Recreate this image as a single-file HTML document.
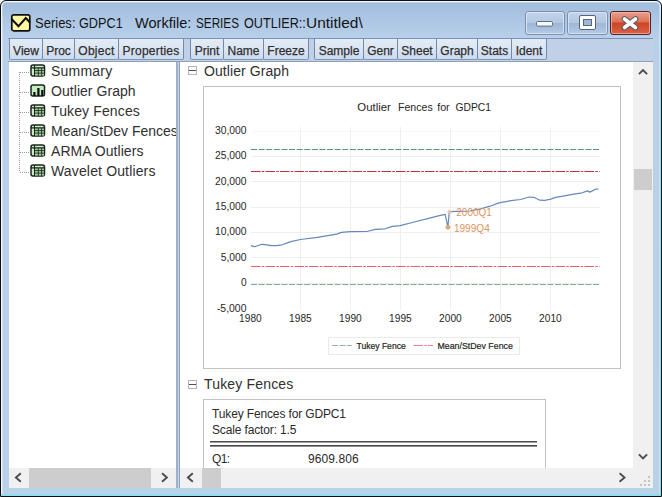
<!DOCTYPE html>
<html>
<head>
<meta charset="utf-8">
<title>Series: GDPC1</title>
<style>
html,body{margin:0;padding:0;background:#fff;}
body{width:662px;height:497px;position:relative;overflow:hidden;font-family:"Liberation Sans",sans-serif;color:#222;}
.abs{position:absolute;}
#win{position:absolute;left:0;top:0;width:660px;height:495px;border:1px solid #0b0f16;border-radius:6px 6px 0 0;
 background:linear-gradient(#a1bddc 0px,#adc7e4 20px,#b8d0ea 38px,#b9d0e9 60px,#b9d0e9 480px,#b8d3e6 100%);
 box-shadow:inset 0 0 0 1px #f4f8fd, inset 0 0 0 2px rgba(255,255,255,.3);}
#cyanb{position:absolute;left:1px;top:494px;width:660px;height:2px;background:linear-gradient(#a3d9ee,#7fe0f2);}
.tw{position:absolute;top:13.5px;font-size:15px;line-height:18px;color:#151515;white-space:pre;transform-origin:0 0;}
/* toolbar */
#tbline{position:absolute;left:8px;top:38px;width:645px;height:1px;background:#7d93b3;}
#tb{position:absolute;left:8px;top:39px;width:645px;height:23px;background:#c0d0e7;border-bottom:1px solid #8fa0ba;box-sizing:border-box;}
.btn{position:absolute;top:38px;height:22px;box-sizing:border-box;border:1px solid #7389a9;border-top-color:#7d93b3;border-bottom-color:#8196b6;border-radius:0 0 2px 2px;
 background:linear-gradient(#e3ebf6,#dbe5f3 50%,#ccdaee);font-size:12px;line-height:24px;color:#303030;text-align:center;white-space:nowrap;overflow:hidden;-webkit-text-stroke:.25px #303030;}
.btn span{display:inline-block;}
/* panels */
#left{position:absolute;left:9px;top:62px;width:167px;height:406px;background:#fff;overflow:hidden;}
#split{position:absolute;left:176px;top:62px;width:4px;height:426px;background:linear-gradient(to right,#a3b3ca 0,#9badc6 2px,#c6d3e6 2px,#c6d3e6 3px,#8fa3c0 3px);}
#right{position:absolute;left:180px;top:62px;width:453px;height:406px;background:#fff;overflow:hidden;}
.ti{position:absolute;left:42px;font-size:14px;line-height:20px;white-space:nowrap;color:#303030;}
.hd{position:absolute;font-size:14px;line-height:20px;white-space:nowrap;color:#303030;}
.box{position:absolute;border:1px solid #c2c2c2;background:#fff;box-sizing:border-box;}
.col{position:absolute;width:9px;height:9px;box-sizing:border-box;border:1px solid #b2b2b2;background:#fff;}
.col:after{content:"";position:absolute;left:0;top:3px;width:7px;height:1px;background:#505050;}
/* scrollbars */
.sb{position:absolute;background:#f0f0f0;}
.th{position:absolute;background:#cdcdcd;}
</style>
</head>
<body>
<div id="win"></div>
<div id="cyanb"></div>
<div class="abs" style="left:660px;top:9px;width:1px;height:487px;background:linear-gradient(#dff0fa,#8fe0f2 40px,#7fe0f2)"></div>

<!-- title icon -->
<svg class="abs" style="left:10px;top:13px" width="22" height="20" viewBox="0 0 22 20">
 <rect x="1.8" y="1.8" width="18" height="16" rx="1.9" fill="#fff9a3" stroke="#111" stroke-width="1.7"/>
 <path d="M1.5 6 L8.5 13.3 L15.8 5 L20 9.5" fill="none" stroke="#111" stroke-width="2.1"/>
</svg>
<div class="tw" style="left:34.7px;transform:scaleX(0.8674)">Series:</div><div class="tw" style="left:78.9px;transform:scaleX(0.8454)">GDPC1</div><div class="tw" style="left:135.2px;transform:scaleX(0.9711)">Workfile:</div><div class="tw" style="left:196.1px;transform:scaleX(0.7814)">SERIES</div><div class="tw" style="left:243.7px;transform:scaleX(0.8424)">OUTLIER::</div><div class="tw" style="left:306.2px;transform:scaleX(1.0303)">Untitled\</div>

<!-- caption buttons -->
<svg class="abs" style="left:524px;top:10px" width="130" height="27" viewBox="0 0 130 27">
 <defs>
  <linearGradient id="gb" x1="0" y1="0" x2="0" y2="1">
   <stop offset="0" stop-color="#c4d5ea"/><stop offset="0.48" stop-color="#b3c8e2"/><stop offset="0.5" stop-color="#9db6d6"/><stop offset="1" stop-color="#b5cbe5"/>
  </linearGradient>
  <linearGradient id="gr" x1="0" y1="0" x2="0" y2="1">
   <stop offset="0" stop-color="#eaa392"/><stop offset="0.45" stop-color="#dd7058"/><stop offset="0.5" stop-color="#cd4426"/><stop offset="1" stop-color="#dc6246"/>
  </linearGradient>
 </defs>
 <rect x="1.5" y="1.5" width="39" height="23" rx="2.5" fill="url(#gb)" stroke="#7d90ad"/>
 <rect x="2.5" y="2.5" width="37" height="21" rx="2" fill="none" stroke="#dfe9f6" stroke-opacity=".8"/>
 <rect x="12.5" y="11.5" width="16" height="4.6" rx="1.2" fill="#f6f8fb" stroke="#5f6e86"/>
 <rect x="43.5" y="1.5" width="40" height="23" rx="2.5" fill="url(#gb)" stroke="#7d90ad"/>
 <rect x="44.5" y="2.5" width="38" height="21" rx="2" fill="none" stroke="#dfe9f6" stroke-opacity=".8"/>
 <rect x="55.5" y="5.5" width="16" height="14" rx="1.5" fill="#fff" stroke="#56657c"/>
 <rect x="59.5" y="9.5" width="8" height="6" fill="#9fb7d5" stroke="#56657c"/>
 <rect x="86.5" y="1.5" width="40" height="23" rx="2.5" fill="url(#gr)" stroke="#4f2424"/>
 <rect x="87.5" y="2.5" width="38" height="21" rx="1.8" fill="none" stroke="#f3c0b2" stroke-opacity=".7"/>
 <path d="M100.5 9 L111.5 17.5 M111.5 9 L100.5 17.5" stroke="#5a5a66" stroke-width="5.6" stroke-linecap="round"/>
 <path d="M100.5 9 L111.5 17.5 M111.5 9 L100.5 17.5" stroke="#fff" stroke-width="3.6" stroke-linecap="round"/>
</svg>

<!-- toolbar -->
<div id="tb"></div>
<div id="tbline"></div>
<div class="btn" style="left:9px;width:34px">View</div>
<div class="btn" style="left:42px;width:33px">Proc</div>
<div class="btn" style="left:74px;width:45px;letter-spacing:.3px">Object</div>
<div class="btn" style="left:118px;width:66px;letter-spacing:.22px">Properties</div>
<div class="btn" style="left:190px;width:34px">Print</div>
<div class="btn" style="left:223px;width:41px">Name</div>
<div class="btn" style="left:263px;width:46px">Freeze</div>
<div class="btn" style="left:314px;width:50px">Sample</div>
<div class="btn" style="left:363px;width:35px">Genr</div>
<div class="btn" style="left:397px;width:40px">Sheet</div>
<div class="btn" style="left:436px;width:42px">Graph</div>
<div class="btn" style="left:477px;width:35px">Stats</div>
<div class="btn" style="left:511px;width:36px">Ident</div>

<!-- left panel -->
<div id="left">
 <svg class="abs" style="left:0;top:0" width="40" height="130" viewBox="0 0 40 130">
  <path d="M10.5 10 V110 M11 10.5 H21 M11 30.5 H21 M11 50.5 H21 M11 70.5 H21 M11 90.5 H21 M11 110.5 H21" fill="none" stroke="#999999" stroke-width="1" stroke-dasharray="1 1"/>
  <g>
   <rect x="22" y="3.1" width="13.5" height="10.9" rx="2" fill="#cdf0c8" stroke="#1a261a" stroke-width="1.5"/>
   <rect x="26" y="6.2" width="9" height="7.3" fill="#a9d2a5"/>
   <path d="M22 5.9 H35.5 M25.5 3 V14" stroke="#1a261a" stroke-width="1.1" fill="none"/>
   <path d="M29.3 6 V14 M32.6 6 V14 M26 8.6 H35 M26 11.1 H35" stroke="#1e2e22" stroke-width=".9" fill="none"/>
  </g>
  <g transform="translate(0,20)">
   <rect x="22" y="3.1" width="13.5" height="10.9" rx="2" fill="#c3ecbf" stroke="#1a261a" stroke-width="1.5"/>
   <path d="M25.4 14 V10 M29.4 14 V6 M33.3 14 V8" stroke="#0c0c0c" stroke-width="2.2" fill="none"/>
  </g>
  <g transform="translate(0,40)">
   <rect x="22" y="3.1" width="13.5" height="10.9" rx="2" fill="#cdf0c8" stroke="#1a261a" stroke-width="1.5"/>
   <rect x="26" y="6.2" width="9" height="7.3" fill="#a9d2a5"/>
   <path d="M22 5.9 H35.5 M25.5 3 V14" stroke="#1a261a" stroke-width="1.1" fill="none"/>
   <path d="M29.3 6 V14 M32.6 6 V14 M26 8.6 H35 M26 11.1 H35" stroke="#1e2e22" stroke-width=".9" fill="none"/>
  </g>
  <g transform="translate(0,60)">
   <rect x="22" y="3.1" width="13.5" height="10.9" rx="2" fill="#cdf0c8" stroke="#1a261a" stroke-width="1.5"/>
   <rect x="26" y="6.2" width="9" height="7.3" fill="#a9d2a5"/>
   <path d="M22 5.9 H35.5 M25.5 3 V14" stroke="#1a261a" stroke-width="1.1" fill="none"/>
   <path d="M29.3 6 V14 M32.6 6 V14 M26 8.6 H35 M26 11.1 H35" stroke="#1e2e22" stroke-width=".9" fill="none"/>
  </g>
  <g transform="translate(0,80)">
   <rect x="22" y="3.1" width="13.5" height="10.9" rx="2" fill="#cdf0c8" stroke="#1a261a" stroke-width="1.5"/>
   <rect x="26" y="6.2" width="9" height="7.3" fill="#a9d2a5"/>
   <path d="M22 5.9 H35.5 M25.5 3 V14" stroke="#1a261a" stroke-width="1.1" fill="none"/>
   <path d="M29.3 6 V14 M32.6 6 V14 M26 8.6 H35 M26 11.1 H35" stroke="#1e2e22" stroke-width=".9" fill="none"/>
  </g>
  <g transform="translate(0,100)">
   <rect x="22" y="3.1" width="13.5" height="10.9" rx="2" fill="#cdf0c8" stroke="#1a261a" stroke-width="1.5"/>
   <rect x="26" y="6.2" width="9" height="7.3" fill="#a9d2a5"/>
   <path d="M22 5.9 H35.5 M25.5 3 V14" stroke="#1a261a" stroke-width="1.1" fill="none"/>
   <path d="M29.3 6 V14 M32.6 6 V14 M26 8.6 H35 M26 11.1 H35" stroke="#1e2e22" stroke-width=".9" fill="none"/>
  </g>
 </svg>
 <div class="ti" style="top:-1px;letter-spacing:.22px">Summary</div>
 <div class="ti" style="top:19px;letter-spacing:.05px">Outlier Graph</div>
 <div class="ti" style="top:39px;letter-spacing:.13px">Tukey Fences</div>
 <div class="ti" style="top:59px">Mean/StDev Fences</div>
 <div class="ti" style="top:79px;letter-spacing:.05px">ARMA Outliers</div>
 <div class="ti" style="top:99px;letter-spacing:.15px">Wavelet Outliers</div>
</div>
<div id="split"></div>

<!-- right panel -->
<div id="right"><div class="abs" style="left:1px;top:0">
 <div class="col" style="left:7px;top:3.5px"></div>
 <div class="hd" style="left:23px;top:-1px;letter-spacing:.08px">Outlier Graph</div>
 <div class="box" style="left:22px;top:24px;width:418px;height:283px"></div>
 <div class="col" style="left:7px;top:317.5px"></div>
 <div class="hd" style="left:23px;top:312px;letter-spacing:.17px">Tukey Fences</div>
 <div class="box" style="left:22px;top:337px;width:343px;height:120px"></div>
 <div class="abs" style="left:31px;top:344.1px;font-size:12px;line-height:16px;white-space:nowrap;color:#2a2a2a;letter-spacing:-.14px">Tukey Fences for GDPC1<br>Scale factor: 1.5</div>
 <div class="abs" style="left:29px;top:379px;width:327px;height:6px;background:linear-gradient(#484848 0,#484848 1px,#a4a4a4 1px,#a4a4a4 2px,#fff 2px,#fff 4px,#484848 4px,#484848 5px,#8c8c8c 5px,#8c8c8c 6px)"></div>
 <div class="abs" style="left:31px;top:390px;font-size:12px;line-height:15px;white-space:nowrap;color:#2a2a2a;letter-spacing:-.6px">Q1:</div>
 <div class="abs" style="left:127px;top:390px;font-size:12px;line-height:15px;white-space:nowrap;color:#2a2a2a;letter-spacing:.08px">9609.806</div>
</div></div>

<!-- graph -->
<svg class="abs" style="left:204px;top:87px" width="417" height="280" viewBox="204 87 417 280" font-family="Liberation Sans, sans-serif">
 <g stroke="#efefef" stroke-width="1" fill="none">
  <path d="M251 131.5 H600" stroke="#f8f8f8"/>
  <path d="M251 156.5 H600 M251 181.5 H600 M251 207.5 H600 M251 232.5 H600 M251 257.5 H600 M251 283.5 H600"/>
  <path d="M300.5 127 V309.5 M350.5 127 V309.5 M400.5 127 V309.5 M450.5 127 V309.5 M500.5 127 V309.5 M550.5 127 V309.5"/>
 </g>
 <path d="M251 149.5 H599.5" stroke="#46895c" stroke-opacity=".9" stroke-width="1" stroke-dasharray="6.1 1.5" fill="none"/>
 <path d="M251 284.5 H599.5" stroke="#5c9a74" stroke-opacity=".8" stroke-width="1" stroke-dasharray="6.1 1.5" fill="none"/>
 <path d="M251 171.5 H599.5" stroke="#b02834" stroke-opacity=".95" stroke-width="1" stroke-dasharray="9.6 1.2 2.5 1.2" fill="none"/>
 <path d="M251 266.5 H599.5" stroke="#dc3648" stroke-opacity=".8" stroke-width="1" stroke-dasharray="9.6 1.2 2.5 1.2" fill="none"/>
 <path d="M250.9 245.7 L254.5 246.7 L261.8 244.3 L266.6 244.8 L271.4 245.7 L276.3 245.7 L282.3 244.8 L290.8 241.6 L300.4 239.5 L317.3 237.3 L336.7 234.1 L341.5 232.4 L350.5 231.7 L366.9 231.5 L375.3 229.3 L385 228.8 L392.3 226.4 L400.2 225.6 L414.2 222 L428.7 218.3 L438.3 215.9 L445.1 214.3 L447.9 227 L449.3 211.7 L457.7 211.4 L469.8 211 L480.8 208.9 L490 206.2 L498.9 202.9 L510.8 200.7 L520.5 199.5 L529 197 L533.8 197.3 L539.8 200.2 L544.7 200.3 L550.8 199.1 L555.6 197.4 L562.8 196.2 L572.5 194.3 L582.2 192.8 L587.5 190.9 L589.9 192.1 L595.5 189.2 L598.6 189" fill="none" stroke="#6688bc" stroke-width="1.2" stroke-linejoin="round"/>
 <circle cx="447.9" cy="227.2" r="2" fill="#dcae7c" stroke="#d39c66" stroke-width=".8"/>
 <circle cx="449.4" cy="211.9" r="1.5" fill="#efc9a6" stroke="#e5b48a" stroke-width=".8"/>
<text x="456.3" y="215.8" font-size="10.8" textLength="35.6" lengthAdjust="spacingAndGlyphs" fill="#dd935c">2000Q1</text>
<text x="453.9" y="231.8" font-size="10.8" textLength="35.9" lengthAdjust="spacingAndGlyphs" fill="#dd935c">1999Q4</text>
<text x="357.3" y="111.3" font-size="10.6" textLength="33.5" lengthAdjust="spacingAndGlyphs" fill="#262626">Outlier</text>
<text x="398" y="111.3" font-size="10.6" textLength="34.7" lengthAdjust="spacingAndGlyphs" fill="#262626">Fences</text>
<text x="437.2" y="111.3" font-size="10.6" textLength="12.5" lengthAdjust="spacingAndGlyphs" fill="#262626">for</text>
<text x="455.4" y="111.3" font-size="10.6" textLength="35.6" lengthAdjust="spacingAndGlyphs" fill="#262626">GDPC1</text>
<text x="214.9" y="133.7" font-size="10.8" textLength="31.6" lengthAdjust="spacingAndGlyphs" fill="#262626">30,000</text>
<text x="214.9" y="159.1" font-size="10.8" textLength="31.6" lengthAdjust="spacingAndGlyphs" fill="#262626">25,000</text>
<text x="214.9" y="184.5" font-size="10.8" textLength="31.6" lengthAdjust="spacingAndGlyphs" fill="#262626">20,000</text>
<text x="214.9" y="209.9" font-size="10.8" textLength="31.6" lengthAdjust="spacingAndGlyphs" fill="#262626">15,000</text>
<text x="214.9" y="235.3" font-size="10.8" textLength="31.6" lengthAdjust="spacingAndGlyphs" fill="#262626">10,000</text>
<text x="220.7" y="260.7" font-size="10.8" textLength="25.8" lengthAdjust="spacingAndGlyphs" fill="#262626">5,000</text>
<text x="240.9" y="286.1" font-size="10.8" textLength="5.6" lengthAdjust="spacingAndGlyphs" fill="#262626">0</text>
<text x="216.9" y="311.5" font-size="10.8" textLength="29.6" lengthAdjust="spacingAndGlyphs" fill="#262626">-5,000</text>
<text x="239.1" y="321.9" font-size="10.8" textLength="22.6" lengthAdjust="spacingAndGlyphs" fill="#262626">1980</text>
<text x="289.1" y="321.9" font-size="10.8" textLength="22.6" lengthAdjust="spacingAndGlyphs" fill="#262626">1985</text>
<text x="339.1" y="321.9" font-size="10.8" textLength="22.6" lengthAdjust="spacingAndGlyphs" fill="#262626">1990</text>
<text x="389.1" y="321.9" font-size="10.8" textLength="22.6" lengthAdjust="spacingAndGlyphs" fill="#262626">1995</text>
<text x="439.1" y="321.9" font-size="10.8" textLength="22.6" lengthAdjust="spacingAndGlyphs" fill="#262626">2000</text>
<text x="489.1" y="321.9" font-size="10.8" textLength="22.6" lengthAdjust="spacingAndGlyphs" fill="#262626">2005</text>
<text x="539.1" y="321.9" font-size="10.8" textLength="22.6" lengthAdjust="spacingAndGlyphs" fill="#262626">2010</text>
 <rect x="328.5" y="337.5" width="191" height="17" fill="#fff" stroke="#e9e9e9"/>
 <path d="M332 345.5 H352" stroke="#4a9062" stroke-opacity=".6" stroke-width="1" stroke-dasharray="6.1 1.5" fill="none"/>
 <path d="M413.5 345.5 H433" stroke="#cc3040" stroke-opacity=".6" stroke-width="1" stroke-dasharray="9.6 1.2 2.5 1.2" fill="none"/>
<text x="356.5" y="349.1" font-size="8.7" textLength="49.2" lengthAdjust="spacingAndGlyphs" fill="#262626" stroke="#262626" stroke-width=".2">Tukey Fence</text>
<text x="437.4" y="349.1" font-size="8.7" textLength="75.5" lengthAdjust="spacingAndGlyphs" fill="#262626" stroke="#262626" stroke-width=".2">Mean/StDev Fence</text>
</svg>

<!-- scrollbars -->
<div class="sb" style="left:9px;top:468px;width:167px;height:20px"></div>
<div class="th" style="left:29px;top:468px;width:121.5px;height:20px"></div>
<div class="sb" style="left:180px;top:468px;width:453px;height:20px"></div>
<div class="th" style="left:201.5px;top:468px;width:19.5px;height:20px"></div>
<div class="sb" style="left:633px;top:62px;width:20px;height:426px"></div>
<div class="th" style="left:634px;top:169px;width:18px;height:21px"></div>
<svg class="abs" style="left:9px;top:62px" width="645" height="426" viewBox="9 62 645 426">
 <g fill="none" stroke="#4c4c4c" stroke-width="1.9">
  <path d="M20.8 473.3 L15.9 477.5 L20.8 481.7"/>
  <path d="M162 473.3 L166.9 477.5 L162 481.7"/>
  <path d="M192.8 473.3 L187.9 477.5 L192.8 481.7"/>
  <path d="M619.6 473.3 L624.5 477.5 L619.6 481.7"/>
  <path d="M638.9 74.2 L643 70 L647.1 74.2"/>
  <path d="M638.9 454.3 L643 458.5 L647.1 454.3"/>
 </g>
 <g fill="#c4c4c4">
  <rect x="648" y="476" width="2" height="2"/>
  <rect x="648" y="480" width="2" height="2"/><rect x="644" y="480" width="2" height="2"/>
  <rect x="648" y="484" width="2" height="2"/><rect x="644" y="484" width="2" height="2"/><rect x="640" y="484" width="2" height="2"/>
 </g>
</svg>
</body>
</html>
